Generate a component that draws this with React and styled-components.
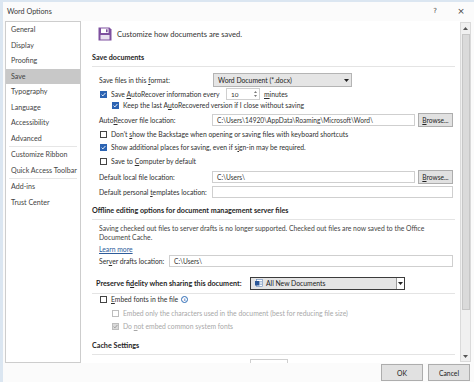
import React from 'react';
import styled, { createGlobalStyle } from 'styled-components';

const Global = createGlobalStyle`
  html, body { margin: 0; padding: 0; background: #dbe6f1; }
  body { font-family: Lato, "Liberation Sans", sans-serif; color: #262626; }
  #root { width: 474px; height: 382px; overflow: hidden; }
  * { box-sizing: border-box; }
`;

const Dialog = styled.div`
  margin: 2px 0 0 3px;
  width: 471px;
  height: 380px;
  background: #fbfbfb;
  display: flex;
  flex-direction: column;
  overflow: hidden;
`;

const TitleBar = styled.div`
  height: 18px;
  flex: none;
  display: flex;
  align-items: center;
  padding-left: 4px;
`;

const Title = styled.div`
  flex: 1;
  font-size: 7.2px;
  color: #3a3a3a;
`;

const TitleBtn = styled.div`
  width: 26px;
  text-align: center;
  font-size: ${p => p.$size}px;
  color: #444;
  font-family: "DejaVu Sans", sans-serif;
`;

const Body = styled.div`
  margin-top: 1px;
  height: 342px;
  flex: none;
  display: flex;
`;

const Nav = styled.div`
  margin-left: 2px;
  width: 76px;
  height: 342px;
  flex: none;
  background: #fff;
  border: 1px solid #cdcdcd;
  display: flex;
  flex-direction: column;
`;

const NavItem = styled.div`
  height: 15.5px;
  flex: none;
  display: flex;
  align-items: center;
  padding-left: 5px;
  font-size: 7.1px;
  color: #444;
  white-space: nowrap;
  background: ${p => (p.$active ? '#c8c8c8' : 'transparent')};
`;

const NavSep = styled.div`
  height: 1px;
  flex: none;
  margin: 0 3px;
  background: #e6e6e6;
`;

const Main = styled.div`
  flex: 1;
  display: flex;
  min-width: 0;
`;

const Content = styled.div`
  flex: 1;
  overflow: hidden;
  padding: 0 5px 0 11px;
  display: flex;
  flex-direction: column;
  background: #fff;
`;

const Header = styled.div`
  margin-top: 6px;
  height: 14px;
  flex: none;
  display: flex;
  align-items: center;
  padding-left: 6px;
  gap: 5px;
  font-size: 7.6px;
  color: #333;
`;

const Heading = styled.div`
  margin-top: ${p => p.$mt}px;
  height: ${p => p.$h || 10}px;
  flex: none;
  display: flex;
  align-items: center;
  padding-left: ${p => p.$indent || 0}px;
  gap: 8px;
  font-size: 7.2px;
  font-weight: bold;
  color: #262626;
  white-space: nowrap;
`;

const Divider = styled.div`
  margin-top: ${p => p.$mt}px;
  height: 1px;
  flex: none;
  background: #e4e4e4;
`;

const Row = styled.div`
  margin-top: ${p => p.$mt}px;
  height: ${p => p.$h || 10}px;
  flex: none;
  display: flex;
  align-items: center;
  padding-left: ${p => p.$indent ?? 7}px;
  font-size: 6.8px;
  color: ${p => (p.$disabled ? '#a8a8a8' : '#303030')};
  white-space: nowrap;
`;

const Label = styled.span`
  width: ${p => (p.$w ? `${p.$w}px` : 'auto')};
  flex: none;
  margin-right: ${p => p.$mr || 0}px;
`;

const U = styled.span`
  text-decoration: underline;
  text-underline-offset: 1px;
`;

const Box = styled.span`
  width: 7px;
  height: 7px;
  flex: none;
  margin: 0 4px 0 1px;
  border: 1px solid ${p => (p.$disabled ? '#bdbdbd' : p.$checked ? '#2c64b3' : '#444')};
  background: ${p => (p.$checked ? (p.$disabled ? '#d9d9d9' : '#2c64b3') : '#fff')};
  display: flex;
  align-items: center;
  justify-content: center;
`;

const Checkbox = ({ checked, disabled }) => (
  <Box $checked={checked} $disabled={disabled}>
    {checked && (
      <svg width="5" height="5" viewBox="0 0 5 5">
        <path d="M0.6 2.6 L1.9 3.9 L4.4 1" fill="none" stroke={disabled ? '#9a9a9a' : '#fff'} strokeWidth="0.9" />
      </svg>
    )}
  </Box>
);

const Select = styled.div`
  width: ${p => p.$w}px;
  height: ${p => p.$h || 14}px;
  flex: none;
  display: flex;
  align-items: center;
  gap: 3px;
  padding-left: 4px;
  background: #e5e5e5;
  border: ${p => (p.$dark ? '1.5px solid #3c3c3c' : '1px solid #b4b4b4')};
  font-size: 6.8px;
  font-weight: normal;
  color: #222;
`;

const SelectText = styled.span`
  flex: 1;
`;

const Arrow = styled.span`
  width: ${p => (p.$boxed ? 8 : 10)}px;
  height: 100%;
  display: flex;
  align-items: center;
  justify-content: center;
  background: ${p => (p.$boxed ? '#fff' : 'transparent')};
  border-left: ${p => (p.$boxed ? '1px solid #9a9a9a' : 'none')};
`;

const Caret = () => (
  <svg width="5" height="3" viewBox="0 0 5 3">
    <path d="M0 0 H5 L2.5 3 Z" fill="#222" />
  </svg>
);

const Input = styled.div`
  width: ${p => p.$w}px;
  height: 12px;
  flex: none;
  display: flex;
  align-items: center;
  padding-left: 4px;
  background: #fff;
  border: 1px solid #cfcfcf;
  font-size: 6.6px;
  color: #333;
  margin-left: ${p => p.$ml || 0}px;
`;

const Spin = styled.div`
  width: 34px;
  height: 12px;
  flex: none;
  display: flex;
  align-items: center;
  justify-content: space-between;
  padding: 0 2px 0 4px;
  background: #fff;
  border: 1px solid #cfcfcf;
  font-size: 6.4px;
  margin: 0 4px 0 0;
`;

const SpinArrows = styled.span`
  display: flex;
  flex-direction: column;
  gap: 2px;
`;

const Button = styled.div`
  width: ${p => p.$w}px;
  height: ${p => p.$h}px;
  flex: none;
  display: flex;
  align-items: center;
  justify-content: center;
  background: #e1e1e1;
  border: 1px solid #adadad;
  font-size: ${p => p.$fs || 6.6}px;
  color: #222;
  margin-left: ${p => p.$ml || 0}px;
`;

const Para = styled.div`
  margin-top: ${p => p.$mt}px;
  padding-left: 7px;
  flex: none;
  font-size: 6.8px;
  line-height: 9px;
  color: #444;
  white-space: nowrap;
`;

const Link = styled.span`
  color: #2e5c9a;
  text-decoration: underline;
  text-underline-offset: 1px;
`;

const Info = styled.span`
  width: 7px;
  height: 7px;
  margin-left: 3px;
  border: 1px solid #2d6bb5;
  border-radius: 50%;
  color: #2d6bb5;
  font-size: 5px;
  line-height: 5px;
  font-weight: bold;
  display: flex;
  align-items: center;
  justify-content: center;
  font-family: "Liberation Serif", serif;
`;

const ScrollBar = styled.div`
  width: 11px;
  height: 340px;
  margin: 1px 3px 0 0;
  flex: none;
  background: #f0f0f0;
  border: 1px solid #dadada;
  display: flex;
  flex-direction: column;
`;

const ScrollBtn = styled.div`
  height: 10px;
  flex: none;
  display: flex;
  align-items: center;
  justify-content: center;
  background: #f0f0f0;
`;

const Thumb = styled.div`
  height: 276px;
  flex: none;
  margin: 1px 0.5px 0;
  background: #dadada;
  border: 1px solid #c6c6c6;
`;

const Track = styled.div`
  flex: 1;
`;

const Footer = styled.div`
  margin-top: 1px;
  height: 17px;
  flex: none;
  display: flex;
  justify-content: flex-end;
  gap: 5px;
  padding-right: 4px;
`;

const SaveIcon = () => (
  <svg width="14" height="14" viewBox="0 0 14 14">
    <path d="M0.5 0.5 H11.5 L13.5 2.5 V13.5 H0.5 Z" fill="#7e509f" />
    <rect x="3" y="1.5" width="7.5" height="4.5" fill="#fff" />
    <rect x="8" y="2.3" width="1.6" height="2.9" fill="#7e509f" />
    <rect x="2.5" y="8" width="9" height="4.5" fill="#e9dff0" />
  </svg>
);

const DocIcon = () => (
  <svg width="8" height="8" viewBox="0 0 8 8">
    <rect x="1.5" y="0.5" width="6" height="7" fill="#fff" stroke="#5f84b8" strokeWidth="0.6" />
    <rect x="0" y="2" width="4.5" height="4.5" fill="#2b5797" />
    <path d="M5 2.5 H7 M5 4 H7 M5 5.5 H7" stroke="#5f84b8" strokeWidth="0.5" />
  </svg>
);

const navItems = [
  'General', 'Display', 'Proofing', 'Save', 'Typography', 'Language',
  'Accessibility', 'Advanced', '-', 'Customize Ribbon', 'Quick Access Toolbar', '-',
  'Add-ins', 'Trust Center',
];

export default function App() {
  return (
    <>
      <Global />
      <Dialog>
        <TitleBar>
          <Title>Word Options</Title>
          <TitleBtn $size={7}>?</TitleBtn>
          <TitleBtn $size={9}>×</TitleBtn>
        </TitleBar>
        <Body>
          <Nav>
            {navItems.map((n, i) =>
              n === '-' ? <NavSep key={i} /> : <NavItem key={i} $active={n === 'Save'}>{n}</NavItem>
            )}
          </Nav>
          <Main>
            <Content>
              <Header>
                <SaveIcon />
                <span>Customize how documents are saved.</span>
              </Header>
              <Heading $mt={11}>Save documents</Heading>
              <Divider $mt={4} />
              <Row $mt={8}>
                <Label $w={114}>Save files in this <U>f</U>ormat:</Label>
                <Select $w={139}>
                  <SelectText>Word Document (*.docx)</SelectText>
                  <Arrow><Caret /></Arrow>
                </Select>
              </Row>
              <Row $mt={4}>
                <Checkbox checked />
                <Label $w={115}>Save <U>A</U>utoRecover information every</Label>
                <Spin>
                  <span>10</span>
                  <SpinArrows>
                    <svg width="3" height="2" viewBox="0 0 3 2"><path d="M0 2 L1.5 0 L3 2Z" fill="#777" /></svg>
                    <svg width="3" height="2" viewBox="0 0 3 2"><path d="M0 0 L1.5 2 L3 0Z" fill="#777" /></svg>
                  </SpinArrows>
                </Spin>
                <span><U>m</U>inutes</span>
              </Row>
              <Row $mt={1} $indent={19}>
                <Checkbox checked />
                <span>Keep the last A<U>u</U>toRecovered version if I close without saving</span>
              </Row>
              <Row $mt={5}>
                <Label $w={113}>Auto<U>R</U>ecover file location:</Label>
                <Input $w={203}>C:\Users\14920\AppData\Roaming\Microsoft\Word\</Input>
                <Button $w={35} $h={14} $ml={3}><span><U>B</U>rowse...</span></Button>
              </Row>
              <Row $mt={4}>
                <Checkbox />
                <span>Don't <U>s</U>how the Backstage when opening or saving files with keyboard shortcuts</span>
              </Row>
              <Row $mt={3}>
                <Checkbox checked />
                <span>Show additional places for saving, even if s<U>i</U>gn-in may be required.</span>
              </Row>
              <Row $mt={4}>
                <Checkbox />
                <span>Save to <U>C</U>omputer by default</span>
              </Row>
              <Row $mt={6}>
                <Label $w={113}>Default local f<U>i</U>le location:</Label>
                <Input $w={203}>C:\Users\</Input>
                <Button $w={35} $h={14} $ml={3}><span><U>B</U>rowse...</span></Button>
              </Row>
              <Row $mt={5}>
                <Label $w={113}>Default personal <U>t</U>emplates location:</Label>
                <Input $w={241} />
              </Row>
              <Heading $mt={8}>Offline editing options for document management server files</Heading>
              <Divider $mt={4} />
              <Para $mt={4}>
                Saving checked out files to server drafts is no longer supported. Checked out files are now saved to the Office<br />
                Document Cache.
              </Para>
              <Row $mt={2}>
                <Link>Learn more</Link>
              </Row>
              <Row $mt={2}>
                <Label $w={70}>Ser<U>v</U>er drafts location:</Label>
                <Input $w={284}>C:\Users\</Input>
              </Row>
              <Heading $mt={12} $indent={4}>
                <Label $w={146}>Preserve fi<U>d</U>elity when sharing this document:</Label>
                <Select $w={155} $h={13} $dark>
                  <DocIcon />
                  <SelectText>All New Documents</SelectText>
                  <Arrow $boxed><Caret /></Arrow>
                </Select>
              </Heading>
              <Divider $mt={5} />
              <Row $mt={0}>
                <Checkbox />
                <span><U>E</U>mbed fonts in the file</span>
                <Info>i</Info>
              </Row>
              <Row $mt={4} $indent={19} $disabled>
                <Checkbox disabled />
                <span>Embed only the characters used in the document (best for reducing file size)</span>
              </Row>
              <Row $mt={3} $indent={19} $disabled>
                <Checkbox checked disabled />
                <span>Do <U>n</U>ot embed common system fonts</span>
              </Row>
              <Heading $mt={9}>Cache Settings</Heading>
              <Divider $mt={4} />
              <Row $mt={4} $h={12} $indent={158}>
                <Input $w={38} />
              </Row>
            </Content>
            <ScrollBar>
              <ScrollBtn>
                <svg width="5" height="3" viewBox="0 0 5 3"><path d="M0 3 L2.5 0 L5 3Z" fill="#555" /></svg>
              </ScrollBtn>
              <Thumb />
              <Track />
              <ScrollBtn>
                <svg width="5" height="3" viewBox="0 0 5 3"><path d="M0 0 L2.5 3 L5 0Z" fill="#555" /></svg>
              </ScrollBtn>
            </ScrollBar>
          </Main>
        </Body>
        <Footer>
          <Button $w={42} $h={17} $fs={6.8}>OK</Button>
          <Button $w={42} $h={17} $fs={6.8}>Cancel</Button>
        </Footer>
      </Dialog>
    </>
  );
}
